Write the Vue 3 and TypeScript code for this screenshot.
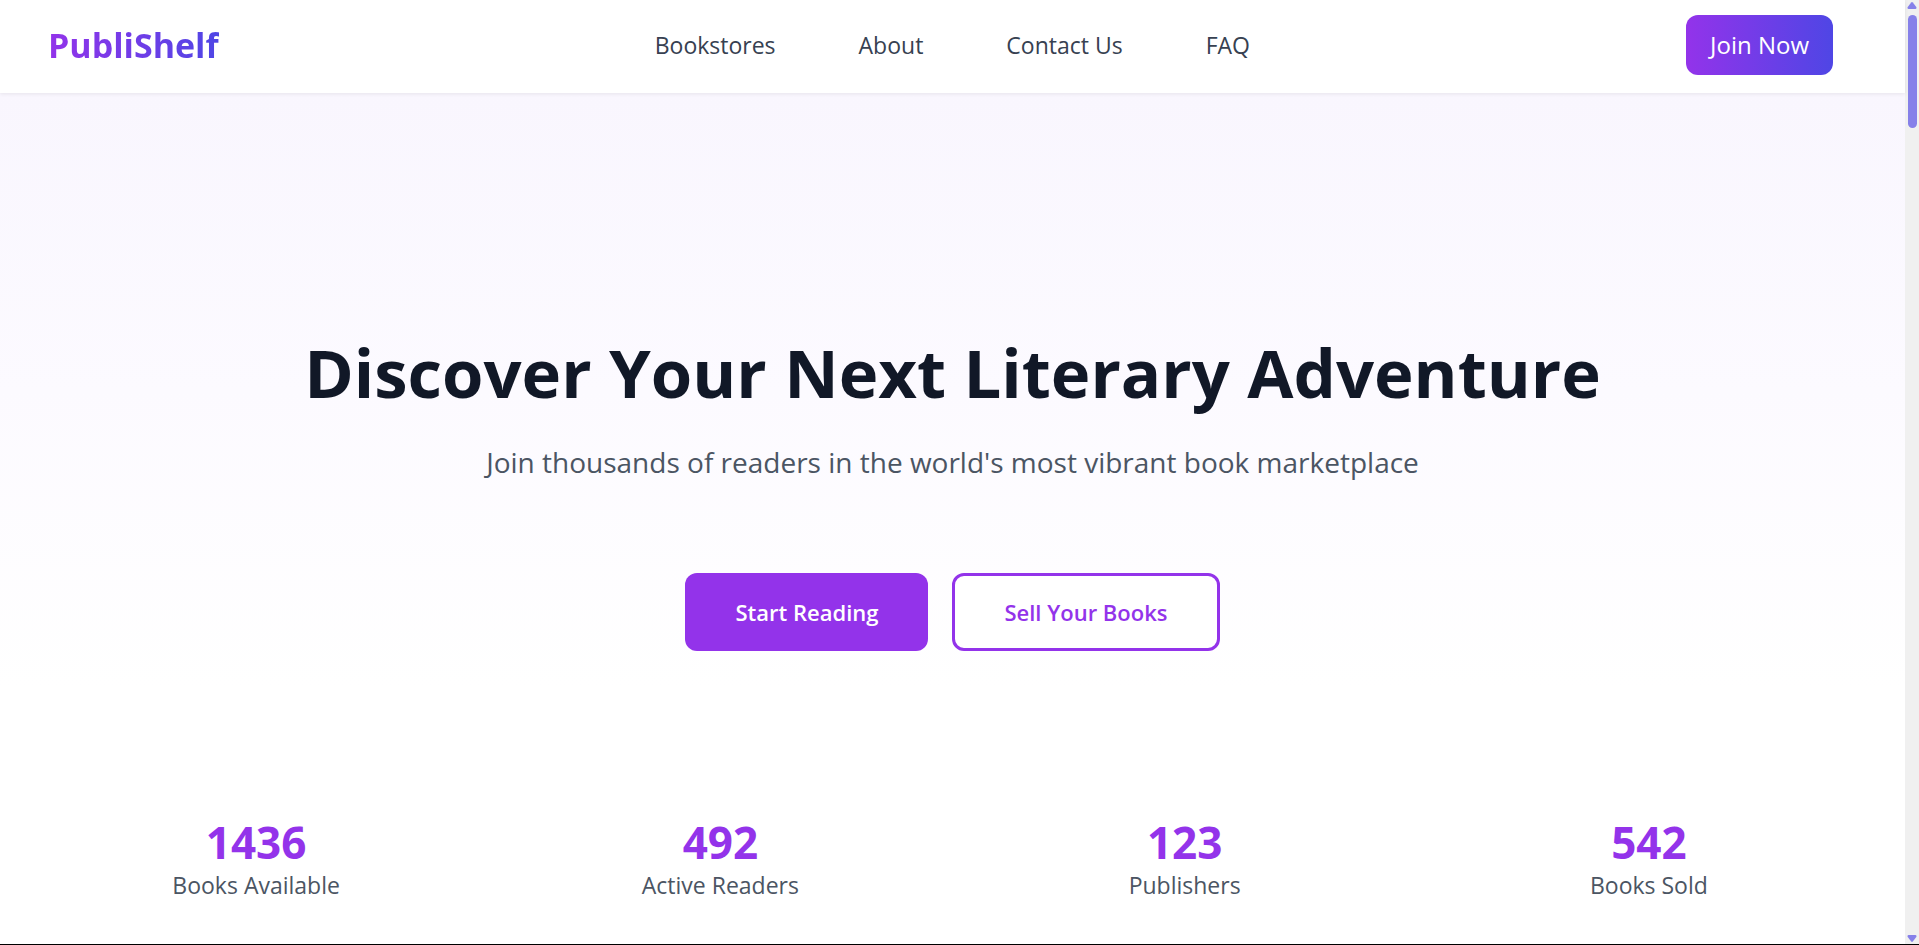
<script setup lang="ts">
interface NavLink {
  label: string
  href: string
}

interface Stat {
  value: number
  label: string
}

const links: NavLink[] = [
  { label: 'Bookstores', href: '#bookstores' },
  { label: 'About', href: '#about' },
  { label: 'Contact Us', href: '#contact' },
  { label: 'FAQ', href: '#faq' },
]

const stats: Stat[] = [
  { value: 1436, label: 'Books Available' },
  { value: 492, label: 'Active Readers' },
  { value: 123, label: 'Publishers' },
  { value: 542, label: 'Books Sold' },
]
</script>

<template>
  <div class="window">
    <div class="page">
      <header class="header">
        <a class="logo" href="#home">PubliShelf</a>
        <nav class="nav" aria-label="Main">
          <a v-for="link in links" :key="link.href" :href="link.href">{{ link.label }}</a>
        </nav>
        <button type="button" class="join">Join Now</button>
      </header>

      <main class="main">
        <section class="hero">
          <h1>Discover Your Next Literary Adventure</h1>
          <p>Join thousands of readers in the world's most vibrant book marketplace</p>
          <div class="actions">
            <button type="button" class="action primary">Start Reading</button>
            <button type="button" class="action outline">Sell Your Books</button>
          </div>
        </section>

        <dl class="stats">
          <div v-for="stat in stats" :key="stat.label" class="stat">
            <dt>{{ stat.label }}</dt>
            <dd>{{ stat.value }}</dd>
          </div>
        </dl>
      </main>
    </div>

    <div class="scrollbar" aria-hidden="true">
      <svg width="10" height="7" viewBox="0 0 10 7">
        <path d="M4.2 .5Q5 -.3 5.8 .5L9.3 5Q9.9 7 8.4 7H1.6Q.1 7 .7 5Z" fill="#8680e9" />
      </svg>
      <div class="thumb"></div>
      <svg class="down" width="10" height="7" viewBox="0 0 10 7">
        <path d="M4.2 6.5Q5 7.3 5.8 6.5L9.3 2Q9.9 0 8.4 0H1.6Q.1 0 .7 2Z" fill="#8680e9" />
      </svg>
    </div>
  </div>
</template>

<style>
body {
  margin: 0;
}
</style>

<style scoped>
.window {
  display: flex;
  box-sizing: border-box;
  min-height: 100vh;
  border-bottom: 1px solid #000;
  background: #fff;
  font-family: "Segoe UI", "Open Sans", "Noto Sans", sans-serif;
}

.page {
  display: flex;
  flex: 1;
  flex-direction: column;
  min-width: 0;
}

.header {
  position: relative;
  display: flex;
  align-items: center;
  justify-content: space-between;
  padding: 15px 72px 18px 48px;
  background: #fff;
  box-shadow: 0 1px 4px rgba(0, 0, 0, 0.08);
}

.logo {
  background: linear-gradient(to right, #9333ea, #4f46e5);
  background-clip: text;
  color: transparent;
  font-size: 34px;
  font-weight: 700;
  line-height: 48px;
  text-decoration: none;
}

.nav {
  display: flex;
  gap: 83px;
}

.nav a {
  color: #374151;
  font-size: 23px;
  line-height: 38px;
  text-decoration: none;
}

button {
  border: 0;
  border-radius: 12px;
  font-family: inherit;
  cursor: pointer;
}

.join {
  padding: 12px 24px;
  background: linear-gradient(to right, #9333ea, #4f46e5);
  color: #fff;
  font-size: 24px;
  line-height: 36px;
}

.main {
  display: flex;
  flex: 1;
  flex-direction: column;
  justify-content: space-between;
  background: linear-gradient(#f9f6fe, #fcfaff 35%, #fff 70%);
}

.hero {
  padding: 243px 24px 0;
  text-align: center;
}

h1 {
  margin: 0;
  color: #111827;
  font-size: 67px;
  font-weight: 700;
  line-height: 72px;
}

.hero p {
  margin: 33px 0 0;
  color: #4b5563;
  font-size: 28px;
  line-height: 42px;
}

.actions {
  display: flex;
  justify-content: center;
  gap: 24px;
  margin-top: 90px;
}

.action {
  font-size: 22px;
  font-weight: 600;
  line-height: 36px;
}

.primary {
  padding: 21px 50px;
  background: #9333ea;
  color: #fff;
}

.outline {
  padding: 18px 49px;
  border: 3px solid #9333ea;
  background: #fff;
  color: #9333ea;
}

.stats {
  display: grid;
  grid-template-columns: repeat(4, 1fr);
  margin: 0;
  padding: 48px 24px 42px;
}

.stat {
  display: flex;
  flex-direction: column-reverse;
  text-align: center;
}

.stat dt {
  color: #4b5563;
  font-size: 23px;
  line-height: 33px;
}

.stat dd {
  margin: 0;
  color: #9333ea;
  font-size: 44px;
  font-weight: 700;
  line-height: 54px;
}

.scrollbar {
  display: flex;
  flex-direction: column;
  align-items: center;
  width: 14px;
  padding: 2px 0;
  box-sizing: border-box;
  background: #f0f0f0;
}

.thumb {
  width: 9px;
  height: 12vh;
  margin-top: 6px;
  border-radius: 5px;
  background: #8680e9;
}

.down {
  margin-top: auto;
}
</style>
